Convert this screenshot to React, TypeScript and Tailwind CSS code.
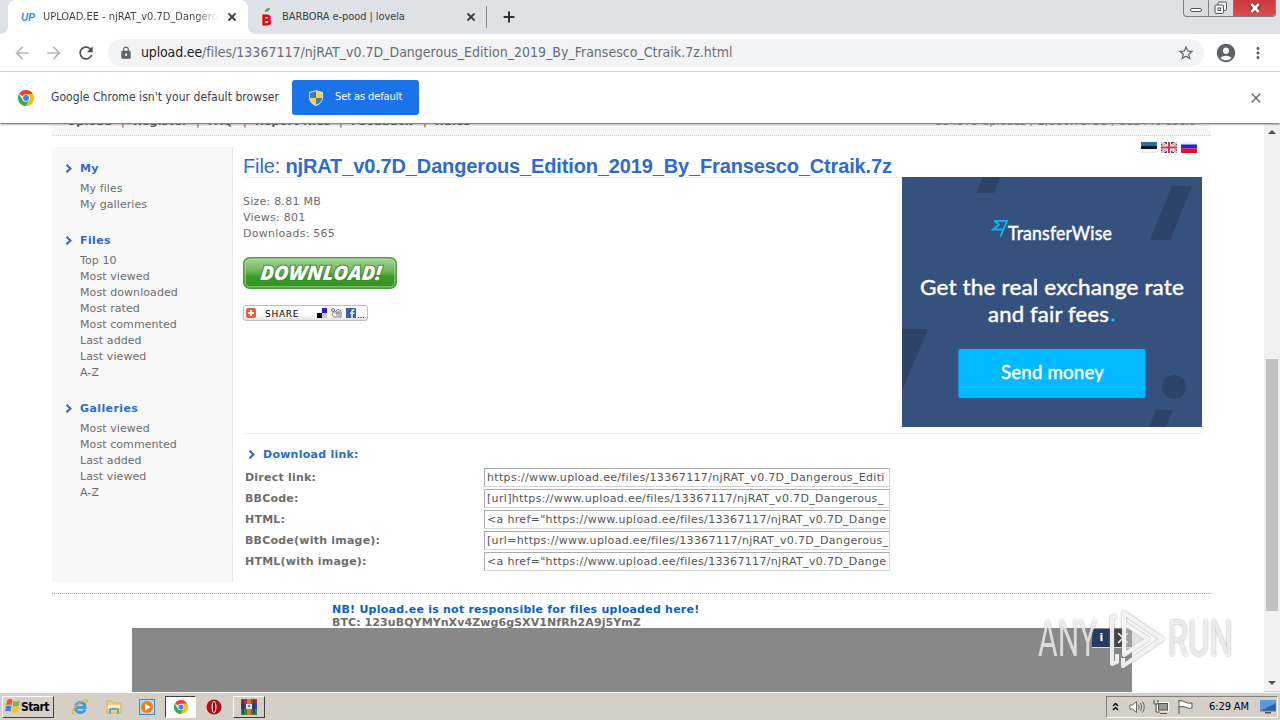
import React from "react";
import { X, Plus } from "lucide-react";
import { MdLock, MdRefresh, MdAccountCircle, MdMoreVert, MdClose, MdArrowBack, MdArrowForward, MdStarBorder } from "react-icons/md";

const UI = "font-['DejaVu_Sans_Condensed','DejaVu_Sans',sans-serif] [font-stretch:condensed]";

function ChromeLogo({ className }: { className: string }) {
  return (
    <svg viewBox="0 0 48 48" className={className}>
      <path d="M24 24 3.2 12A24 24 0 0 1 44.8 12Z" fill="#ea4335" />
      <path d="M3.2 12A24 24 0 0 0 24 48L34.4 30 24 24 13.6 30Z" fill="#34a853" />
      <path d="M44.8 12A24 24 0 0 1 24 48L34.4 30V18L24 12Z" fill="#fbbc05" />
      <circle cx="24" cy="24" r="11.5" fill="#fff" />
      <circle cx="24" cy="24" r="9" fill="#4285f4" />
    </svg>
  );
}

function Shield() {
  return (
    <svg viewBox="0 0 14 16" className="h-4 w-[14px]">
      <path d="M7 0 14 2.2V7C14 12 10 15 7 16 4 15 0 12 0 7V2.2Z" fill="#d9dde5" />
      <path d="M7 1.3V8H1V3Z" fill="#3b78c9" />
      <path d="M7 1.3 13 3V8H7Z" fill="#ffd23c" />
      <path d="M1 8H7V14.7C4 13.5 1 11.5 1 8Z" fill="#ffd23c" />
      <path d="M13 8H7V14.7C10 13.5 13 11.5 13 8Z" fill="#3b78c9" />
    </svg>
  );
}

function TabStrip() {
  return (
    <div className="flex h-[34px] items-stretch bg-[#dee1e6]">
      <div className="flex w-2 items-end bg-white">
        <div className="h-full w-full rounded-br-lg bg-[#dee1e6]" />
      </div>
      <div className="flex w-60 items-center rounded-t-lg bg-white pl-[13px]">
        <span className="w-[22px] font-['Liberation_Sans',sans-serif] text-[10px] font-bold italic text-[#3f86e8]">UP</span>
        <span className={`${UI} w-[175px] overflow-hidden whitespace-nowrap bg-linear-to-r from-[#3c4043] from-88% to-transparent bg-clip-text text-[11px] text-transparent`}>UPLOAD.EE - njRAT_v0.7D_Dangerous</span>
        <X className="ml-[8px] size-3 text-[#3c4043]" strokeWidth={3.6} />
      </div>
      <div className="flex w-2 bg-white">
        <div className="h-full w-full rounded-bl-lg bg-[#dee1e6]" />
      </div>
      <div className="flex w-[231px] items-center border-r border-[#85888d] pl-1 [border-image:linear-gradient(transparent_7px,#85888d_7px,#85888d_27px,transparent_27px)_1]">
        <svg viewBox="0 0 14 18" className="mb-[1px] h-[18px] w-[14px]">
          <path d="M5 4Q5 0 10 0 9 4 5 4Z" fill="#36a852" />
          <text x="2" y="16.5" fontSize="14" textLength="9.5" lengthAdjust="spacingAndGlyphs" fontWeight="900" fontFamily="Liberation Sans" fill="#e3000f" stroke="#e3000f" strokeWidth=".8">B</text>
        </svg>
        <span className={`${UI} ml-2 w-[180px] whitespace-nowrap text-[11px] tracking-[-0.08px] text-[#3c4043]`}>BARBORA e-pood | lovela</span>
        <X className="ml-[3px] size-3 text-[#3c4043]" strokeWidth={3.6} />
      </div>
      <Plus className="ml-[14px] mt-[9px] size-4 text-[#2f3337]" strokeWidth={3} />
      <div className="ml-auto mr-[4px] flex h-[17px] w-[93px] overflow-hidden rounded-b-[4px] border border-t-0 border-[#7b7f86] bg-[#d9dce2]">
        <div className="flex w-[25px] items-center justify-center border-r border-[#7b7f86] pt-1">
          <div className="h-[4px] w-3 rounded-sm border border-[#555] bg-white" />
        </div>
        <div className="flex w-[25px] items-center justify-center border-r border-[#7b7f86]">
          <svg viewBox="0 0 14 14" className="size-[14px]" fill="#eef0f3" stroke="#555b66">
            <rect x="4" y="1" width="8.5" height="8.5" rx="1" />
            <rect x="1" y="4" width="8.5" height="8.5" rx="1" />
            <rect x="4" y="7" width="2.5" height="2.5" />
          </svg>
        </div>
        <div className="flex grow items-center justify-center bg-linear-to-b from-[#c9393c] to-[#e04a4b]">
          <svg viewBox="0 0 12 10" className="h-[10px] w-3">
            <path d="M2 1 10 9M10 1 2 9" stroke="#5b3030" strokeWidth="4.2" />
            <path d="M2.3 1 9.7 9M9.7 1 2.3 9" stroke="#fff" strokeWidth="2.6" />
          </svg>
        </div>
      </div>
    </div>
  );
}

function Toolbar() {
  return (
    <div className="flex h-[38px] items-center border-b border-[#dadce0] bg-white">
      <MdArrowBack className="ml-3 size-5 text-[#b5b7ba]" />
      <MdArrowForward className="ml-3 size-5 text-[#b5b7ba]" />
      <MdRefresh className="ml-3 size-5 text-[#4d5156]" />
      <div className="ml-[12px] flex h-7 w-[1096px] items-center rounded-full bg-[#f1f3f4] pl-[11px]">
        <MdLock className="size-[14px] text-[#5f6368]" />
        <span className={`${UI} ml-[8px] whitespace-nowrap text-[14px] tracking-[0.005px] text-[#6a6e73]`}>
          <span className="tracking-[-0.15px] text-[#202124]">upload.ee</span>/files/13367117/njRAT_v0.7D_Dangerous_Edition_2019_By_Fransesco_Ctraik.7z.html
        </span>
        <MdStarBorder className="ml-auto mr-[9px] size-[18px] text-[#5f6368]" />
      </div>
      <MdAccountCircle className="ml-[11px] size-[22px] text-[#5f6368]" />
      <MdMoreVert className="ml-[12px] size-[18px] text-[#5f6368]" />
    </div>
  );
}

function InfoBar() {
  return (
    <div className="relative z-10 flex h-[51px] items-center bg-white shadow-[0_1px_2px_#555]">
      <ChromeLogo className="ml-[18px] size-4" />
      <span className={`${UI} mb-px ml-[17px] w-[241px] whitespace-nowrap text-[12px] tracking-[0.06px] text-[#3c4043]`}>Google Chrome isn't your default browser</span>
      <div className="flex h-[35px] w-[127px] items-center rounded-[3px] bg-[#1a73e8] pl-[17px]">
        <Shield />
        <span className={`${UI} ml-3 whitespace-nowrap text-[11px] tracking-[-0.1px] text-white`}>Set as default</span>
      </div>
      <MdClose className="ml-auto mr-4 size-4 text-[#5f6368]" />
    </div>
  );
}

function Chevron() {
  return (
    <svg viewBox="0 0 7 9" className="mb-px h-[9px] w-[7px] shrink-0">
      <path d="M1.500 .8 5.500 4.500 1.500 8.200" fill="none" stroke="#3468b5" strokeWidth="2" />
    </svg>
  );
}

const MENU = [
  { title: "My", items: ["My files", "My galleries"] },
  { title: "Files", items: ["Top 10", "Most viewed", "Most downloaded", "Most rated", "Most commented", "Last added", "Last viewed", "A-Z"] },
  { title: "Galleries", items: ["Most viewed", "Most commented", "Last added", "Last viewed", "A-Z"] },
];

function Sidebar() {
  return (
    <div className="flex h-[435px] w-[181px] shrink-0 flex-col gap-5 border-r border-[#e6e6e6] bg-[repeating-conic-gradient(#f4f4f4_0_25%,#fcfcfc_0_50%)] bg-size-[2px_2px] pl-[13px] pt-[14px]">
      {MENU.map((g) => (
        <div key={g.title}>
          <div className="mb-1 flex h-4 items-center gap-2 font-bold tracking-[0.4px] text-[#2b6cc9]">
            <Chevron />
            {g.title}
          </div>
          {g.items.map((i) => (
            <div key={i} className="h-4 pl-[15px] tracking-[0.08px]">{i}</div>
          ))}
        </div>
      ))}
    </div>
  );
}

function Flags() {
  return (
    <div className="flex h-[11px] justify-end gap-1 pr-[5px]">
      <svg viewBox="0 0 16 11" className="h-[11px] w-4">
        <rect width="16" height="11" fill="#ddd" />
        <rect width="16" height="4" fill="#2f6e9f" />
        <rect y="4" width="16" height="3" fill="#0b1620" />
        <rect y="7" width="16" height="3.5" fill="#f6f6f6" />
      </svg>
      <svg viewBox="0 0 16 11" className="h-[11px] w-4">
        <rect width="16" height="11" fill="#3d3f93" />
        <path d="M0 0 16 11M16 0 0 11" stroke="#fff" strokeWidth="2.6" />
        <path d="M0 0 16 11M16 0 0 11" stroke="#d8606c" strokeWidth=".9" />
        <path d="M8 0V11M0 5.5H16" stroke="#fff" strokeWidth="4" />
        <path d="M8 0V11M0 5.5H16" stroke="#d7323e" strokeWidth="2" />
      </svg>
      <svg viewBox="0 0 16 11" className="h-[11px] w-4">
        <rect width="16" height="11" fill="#eee" />
        <rect y="2.5" width="16" height="4" fill="#2a20e0" />
        <rect y="6.5" width="16" height="4.5" fill="#e0141c" />
      </svg>
    </div>
  );
}

function DownloadButton() {
  return (
    <svg viewBox="0 0 154 32" className="h-8 w-[154px]">
      <defs>
        <linearGradient id="dl" x2="0" y2="1">
          <stop offset="0" stopColor="#a9d89c" />
          <stop offset=".5" stopColor="#62b04f" />
          <stop offset=".6" stopColor="#3c9a28" />
          <stop offset="1" stopColor="#2f961b" />
        </linearGradient>
      </defs>
      <rect x=".75" y=".75" width="152.5" height="30.5" rx="6" fill="url(#dl)" stroke="#4c9a3f" strokeWidth="1.5" />
      <rect x="2.2" y="2.2" width="149.6" height="27.6" rx="5" fill="none" stroke="#b4dcaa" strokeOpacity=".8" />
      <g transform="translate(17 23) skewX(-5)">
        <text textLength="121" lengthAdjust="spacingAndGlyphs" fontFamily="Open Sans" fontWeight="800" fontStyle="italic" fontSize="20" fill="#fff" stroke="#3c8a2e" strokeWidth="2" paintOrder="stroke">DOWNLOAD!</text>
      </g>
    </svg>
  );
}

function ShareButton() {
  return (
    <div className="flex h-4 w-[125px] items-center rounded-[3px] border border-[#bdbdbd] bg-linear-to-b from-white from-60% to-[#e4e4e4] pl-[2px]">
      <svg viewBox="0 0 10 10" className="size-[10px]">
        <rect width="10" height="10" rx="2" fill="#f2593a" />
        <path d="M5 2V8M2 5H8" stroke="#fff" strokeWidth="2" />
      </svg>
      <span className="ml-[9px] mt-px w-[51px] text-[9px] tracking-[0.7px] text-black">SHARE</span>
      <svg viewBox="0 0 50 12" className="h-3 w-[50px]">
        <rect x="1" y="6" width="5" height="5" fill="#000" />
        <rect x="6" y="1" width="5" height="5" fill="#2416ef" />
        <rect x="6" y="6" width="5" height="5" fill="#ccc" />
        <g fill="none" stroke="#666">
          <circle cx="17" cy="3" r="1.5" />
          <path d="M17 5Q15 9 18 10H25V4L22 2 19 5ZM19 6H24M21 4V9M23 4V9" strokeWidth=".8" />
        </g>
        <rect x="30" y="1" width="10" height="10" fill="#3b5ea8" />
        <path d="M38.5 3H37Q36 3 36 4.2V11M34 6.2H38.5" stroke="#fff" strokeWidth="1.5" fill="none" />
        <path d="M42 10.5H43M44.5 10.5H45.5M47 10.5H48" stroke="#333" />
      </svg>
    </div>
  );
}

function Banner() {
  return (
    <svg viewBox="0 0 300 250" className="h-[250px] w-[300px] shrink-0 font-['Lato',sans-serif]">
      <rect width="300" height="250" fill="#37517e" />
      <g fill="#2e4369">
        <path d="M81 0H99L92 16H74ZM270 9H290L268 63H248ZM0 152H26L0 214ZM254 233H271L264 250H247Z" />
        <circle cx="272" cy="210" r="12" />
      </g>
      <path d="M92.500 43.800H105L98.500 59.500M92.500 43.800 97 47.800 91 52.500H101" fill="none" stroke="#00b9ff" strokeWidth="1.8" />
      <rect x="55.500" y="170.500" width="189" height="52" rx="3" fill="#2d5e8f" />
      <rect x="56.500" y="172" width="187" height="49" rx="2" fill="#00b9ff" />
      <g fill="#fff" stroke="#fff" strokeWidth=".45">
        <text x="106" y="62.500" fontSize="18.500" textLength="104" lengthAdjust="spacingAndGlyphs">TransferWise</text>
        <text x="18" y="118" fontSize="22" textLength="264" lengthAdjust="spacingAndGlyphs">Get the real exchange rate</text>
        <text x="86" y="144.500" fontSize="22" textLength="121" lengthAdjust="spacingAndGlyphs">and fair fees</text>
        <text x="99" y="202" fontSize="19" textLength="103" lengthAdjust="spacingAndGlyphs">Send money</text>
      </g>
      <circle cx="211" cy="143" r="1.700" fill="#00b9ff" />
    </svg>
  );
}

const LINKS = [
  ["Direct link:", "https://www.upload.ee/files/13367117/njRAT_v0.7D_Dangerous_Editi"],
  ["BBCode:", "[url]https://www.upload.ee/files/13367117/njRAT_v0.7D_Dangerous_"],
  ["HTML:", "<a href=\"https://www.upload.ee/files/13367117/njRAT_v0.7D_Dange"],
  ["BBCode(with image):", "[url=https://www.upload.ee/files/13367117/njRAT_v0.7D_Dangerous_"],
  ["HTML(with image):", "<a href=\"https://www.upload.ee/files/13367117/njRAT_v0.7D_Dange"],
];

function Watermark() {
  return (
    <svg viewBox="0 0 200 68" className="absolute left-[1036px] top-[482px] h-[68px] w-[200px] drop-shadow-[0_0_1px_#888]">
      <g fill="#fff" fillOpacity=".7" fontFamily="Roboto" fontSize="50" fontWeight="400">
        <text x="2" y="50" textLength="59" lengthAdjust="spacingAndGlyphs">ANY</text>
        <text x="132" y="50" textLength="65" lengthAdjust="spacingAndGlyphs">RUN</text>
      </g>
      <g fill="none" stroke="#fff" strokeOpacity=".85" strokeWidth="4" strokeLinejoin="round">
        <path d="M80 10 76 12V58L81 56V48" />
        <path d="M88 17V7L126 33 87 60V52" />
        <path d="M88 17 112 33 88 49Z" fill="#fff" fillOpacity=".4" />
      </g>
    </svg>
  );
}

function Page() {
  return (
    <div className="relative h-[568px] w-[1264px] overflow-hidden bg-white pl-[52px] font-['DejaVu_Sans',Verdana,sans-serif] text-[11px] leading-4 tracking-[0.15px] whitespace-nowrap text-[#6d6d6d]">
      <div className="-mt-[14px] flex h-[26px] w-[1159px] items-start justify-between border-b border-dotted border-[#ccc] bg-[#f6f6f6] pl-[15px] pr-[15px] pt-[4px]">
        <div className="flex font-bold tracking-[0.3px] text-[#555]">
          <span className="w-[54px]">Upload</span>
          <span className="w-3 font-normal">|</span>
          <span className="w-[63px]">Register</span>
          <span className="w-3 font-normal">|</span>
          <span className="w-[35px]">FAQ</span>
          <span className="w-3 font-normal">|</span>
          <span className="w-[84px]">Report files</span>
          <span className="w-3 font-normal">|</span>
          <span className="w-[72px]">Feedback</span>
          <span className="w-3 font-normal">|</span>
          <span>Rules</span>
        </div>
        <span className="text-[#888]">554575 uploads / 2,660.75 GB / 112440 users</span>
      </div>
      <div className="mt-[11px] flex">
        <Sidebar />
        <div className="-mt-[5px] ml-[10px] w-[959px]">
          <Flags />
          <div className="mt-[2px] flex h-[22px] items-start font-['Liberation_Sans',sans-serif] text-[20px] leading-[22px] tracking-[-0.14px] text-[#2f6bcb]">
            <span className="whitespace-pre">File: </span>
            <b>njRAT_v0.7D_Dangerous_Edition_2019_By_Fransesco_Ctraik.7z</b>
          </div>
          <div className="flex h-[257px] border-b border-[#eee]">
            <div className="w-[659px] border-t border-[#eee] pt-4">
              <div className="tracking-[0.25px]">
                <div>Size: 8.81 MB</div>
                <div>Views: 801</div>
                <div>Downloads: 565</div>
              </div>
              <div className="mb-4 mt-[15px]"><DownloadButton /></div>
              <ShareButton />
            </div>
            <Banner />
          </div>
          <div className="ml-[5px] mt-[13px] flex h-4 items-center gap-2 font-bold tracking-[0.25px] text-[#2b6cc9]">
            <Chevron />
            Download link:
          </div>
          <div className="mt-[5px] flex flex-col gap-[2px]">
            {LINKS.map(([label, value]) => (
              <div key={label} className="flex h-[19px] items-center pl-[2px]">
                <b className="w-[239px] tracking-[0.22px]">{label}</b>
                <div className="flex h-[19px] w-[406px] items-center overflow-hidden border border-[#d4d4d4] border-l-[#aaa] border-t-[#aaa] px-[2px] pt-px tracking-[0.33px] text-[#555]">{value}</div>
              </div>
            ))}
          </div>
        </div>
      </div>
      <div className="mt-[11px] w-[1159px] border-t border-dotted border-[#aaa] pl-[280px] pt-[9px] font-bold leading-[13px]">
        <div className="tracking-[0.24px] text-[#0a62c4]">NB! Upload.ee is not responsible for files uploaded here!</div>
        <div className="tracking-[0.08px]">BTC: 123uBQYMYnXv4Zwg6gSXV1NfRh2A9j5YmZ</div>
      </div>
      <div className="absolute left-[132px] top-[504px] flex h-16 w-[1000px] justify-end gap-[2px] bg-[#888]">
        <div className="mt-px flex h-[19px] w-[19px] items-center justify-center border-b border-[#ddd] bg-[#253a5c] font-bold text-white">i</div>
        <div className="mt-px flex h-[19px] w-[19px] items-center justify-center border-b border-[#ddd] bg-[#444] text-white"><X className="size-[18px]" /></div>
      </div>
      <Watermark />
    </div>
  );
}

function Scrollbar() {
  return (
    <div className="flex w-4 flex-col items-center bg-[#f1f1f1]">
      <div className="mt-[6px] border-x-4 border-b-[4px] border-x-transparent border-b-[#505050]" />
      <div className="mt-[225px] h-[252px] w-3 bg-[#c1c1c1]" />
      <div className="mb-[7px] mt-auto border-x-4 border-t-[4px] border-x-transparent border-t-[#505050]" />
    </div>
  );
}

function Taskbar() {
  const raised = "border border-white border-b-[#404040] border-r-[#404040]";
  return (
    <div className="flex h-7 items-center border-t border-white bg-[#d4d0c8] pl-[2px] shadow-[0_-1px_0_#d4d0c8]">
      <div className={`${raised} flex h-[22px] w-[52px] items-center pl-px`}>
        <svg viewBox="0 0 16 16" className="size-[17px]">
          <path d="M3 2Q6 0 8 2L7 7Q5 5 2 7Z" fill="#e9562b" />
          <path d="M9 2.500Q12 4 15 2L14 7Q11 9 8 7.500Z" fill="#83b93a" />
          <path d="M2 8Q5 6 7 8L6 13Q4 11 1 13Z" fill="#3a82d4" />
          <path d="M8 8.500Q11 10 14 8L13 13Q10 15 7 13.500Z" fill="#f8c327" />
        </svg>
        <span className={`${UI} text-[12px] font-bold tracking-[-0.6px] text-black`}>Start</span>
      </div>
      <svg viewBox="0 0 18 18" className="ml-[17px] size-[18px]">
        <path d="M14 11.500Q12 15 8.500 14.500 4 13.500 4.500 9 5.500 4.500 10 4.500 14.500 5 14 9.500H5" fill="none" stroke="#3f9ed8" strokeWidth="3" />
        <path d="M3 16Q-1 15 5 8 13 0 16 2 17 3 15.500 5" fill="none" stroke="#e5b52c" strokeWidth="1.400" />
      </svg>
      <svg viewBox="0 0 18 18" className="ml-4 size-[18px]">
        <path d="M2 3H7L8 5H16V15H2Z" fill="#edd283" stroke="#c5a453" strokeWidth=".6" />
        <path d="M3 7H15V10H3Z" fill="#fff3bd" />
        <path d="M4 16V11Q9 8 14 11V16H12V12H6V16Z" fill="#58a8dc" />
      </svg>
      <svg viewBox="0 0 16 16" className="ml-4 size-4">
        <rect x=".5" y=".5" width="15" height="15" fill="#b4d6ee" stroke="#4c88bc" />
        <circle cx="8" cy="8" r="6" fill="#ee8018" />
        <path d="M6 4.500 11.500 8 6 11.500Z" fill="#fff" />
      </svg>
      <div className="ml-[10px] flex h-[22px] w-[31px] items-center justify-center border border-[#404040] border-b-white border-r-white bg-white">
        <ChromeLogo className="size-[14px]" />
      </div>
      <svg viewBox="0 0 16 16" className="ml-[10px] size-4">
        <circle cx="8" cy="8" r="7.500" fill="#b60d14" />
        <ellipse cx="8" cy="8" rx="2.500" ry="6" fill="#eee" />
        <ellipse cx="8" cy="8" rx="1.300" ry="5" fill="#8b080c" />
      </svg>
      <div className={`${raised} ml-[11px] flex h-[22px] w-8 items-center justify-center`}>
        <svg viewBox="0 0 16 16" className="size-4">
          <rect width="16" height="5" fill="#a73744" />
          <rect y="5" width="16" height="5" fill="#3244a0" />
          <rect y="10" width="16" height="6" fill="#35824a" />
          <rect x="6" width="4" height="16" fill="#d8732f" />
          <rect x="5" y="5" width="6" height="5" fill="#ddd" />
          <path d="M2 1V15M13 1V15M7 7H9" stroke="#222" />
        </svg>
      </div>
      <div className="ml-auto mr-[2px] flex h-[22px] w-[172px] items-center border border-[#808080] border-b-white border-r-white pl-[5px]">
        <svg viewBox="0 0 7 9" className="h-[9px] w-[7px]"><path d="M1 4 3.500 1.500 6 4M1 8 3.500 5.500 6 8" stroke="#000" strokeWidth="1.400" fill="none" /></svg>
        <svg viewBox="0 0 16 14" className="ml-[10px] h-[14px] w-4" fill="none" stroke="#666">
          <path d="M1 5H3.500L7.500 1.500V12.500L3.500 9H1Z" fill="#fff" />
          <path d="M9.500 4.500Q11 7 9.500 9.500M11.500 3Q14 7 11.500 11M13.500 1.500Q17 7 13.500 12.500" />
        </svg>
        <svg viewBox="0 0 16 16" className="ml-[8px] size-4" fill="none" stroke="#555">
          <rect x="4.500" y="3.500" width="11" height="8.500" fill="#999" stroke="#fff" />
          <rect x="5.500" y="4.500" width="9" height="6.500" />
          <path d="M7 14.500H14M1 1V5H5V1M3 5V13H7" />
        </svg>
        <svg viewBox="0 0 16 16" className="ml-[8px] size-4"><path d="M2 1V15M2 2Q5 1 8 3 11 5 15 4V9Q11 10 8 8 5 7 2 8" fill="#fff" stroke="#555" /></svg>
        <span className={`${UI} ml-[16px] mt-[2px] w-[51px] whitespace-nowrap text-[11px] tracking-[-0.1px] text-black`}>6:29 AM</span>
        <svg viewBox="0 0 16 14" className="h-[14px] w-4"><rect width="16" height="11" fill="#2862b5" stroke="#777" /><path d="M0 11 16 3V0H0Z" fill="#5a9be0" /><rect x="5" y="12" width="6" height="1.500" fill="#555" /></svg>
      </div>
    </div>
  );
}

export default function App() {
  return (
    <div className="flex h-[720px] w-[1280px] flex-col overflow-hidden bg-white">
      <TabStrip />
      <Toolbar />
      <InfoBar />
      <div className="flex h-[569px] pt-px">
        <Page />
        <Scrollbar />
      </div>
      <Taskbar />
    </div>
  );
}
